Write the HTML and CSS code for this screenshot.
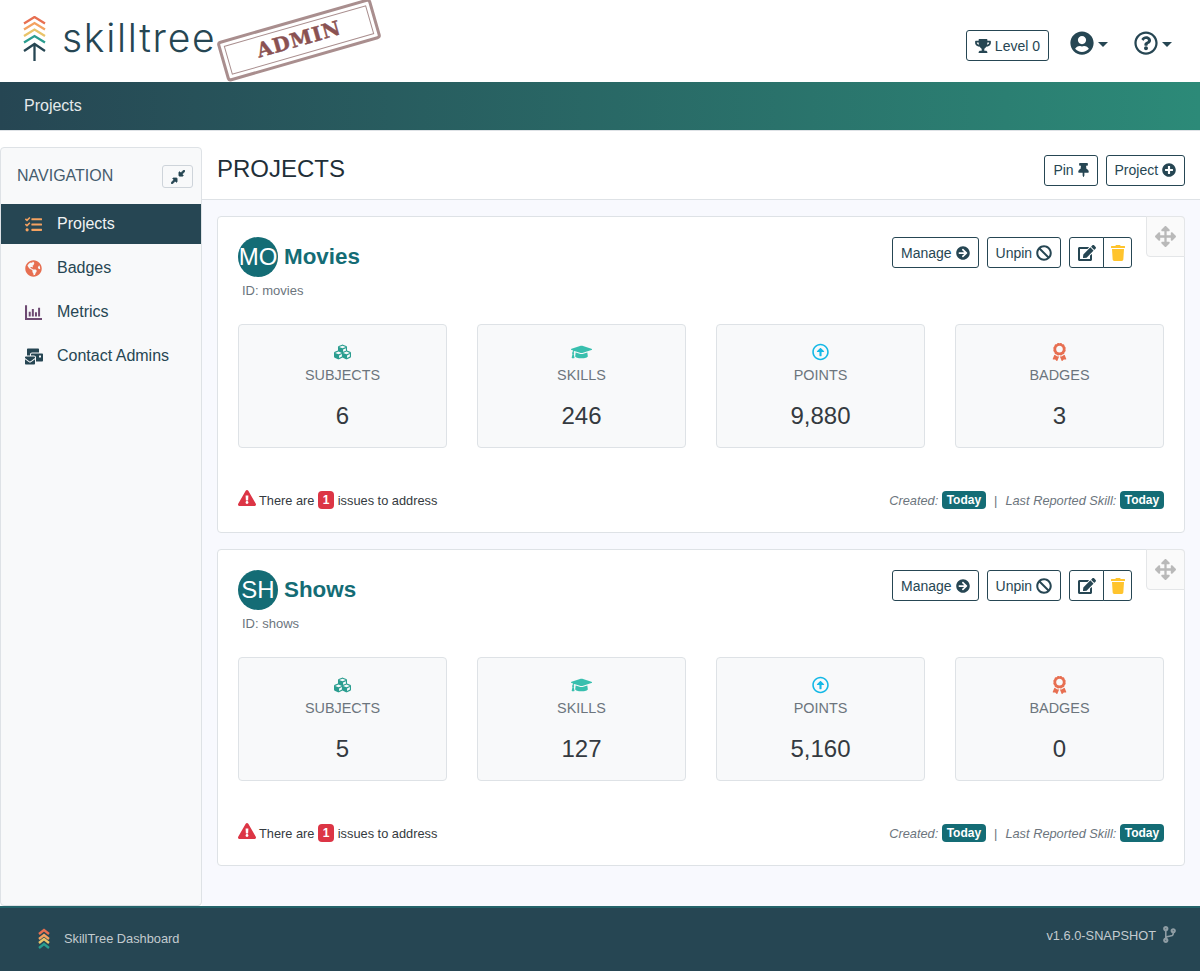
FILE: index.html
```html
<!DOCTYPE html>
<html lang="en">
<head>
    <meta charset="UTF-8">
    <meta name="viewport" content="width=device-width, initial-scale=1.0">
    <title>SkillTree Dashboard</title>
    <link rel="stylesheet" href="styles.css">
</head>
<body>

    <!-- icon sprite -->
    <svg class="sprite" xmlns="http://www.w3.org/2000/svg">
        <symbol id="i-trophy" viewBox="0 0 576 512"><path d="M552 64H448V24c0-13.3-10.7-24-24-24H152c-13.3 0-24 10.7-24 24v40H24C10.7 64 0 74.7 0 88v56c0 35.7 22.5 72.4 61.9 100.7 31.5 22.7 69.8 37.1 110 41.7C203.3 338.5 240 360 240 360v72h-48c-35.3 0-64 20.7-64 56v12c0 6.6 5.4 12 12 12h296c6.6 0 12-5.4 12-12v-12c0-35.3-28.7-56-64-56h-48v-72s36.7-21.5 68.1-73.6c40.3-4.6 78.6-19 110-41.7 39.3-28.3 61.9-65 61.9-100.7V88c0-13.3-10.7-24-24-24zM99.3 192.8C74.9 175.2 64 155.6 64 144v-16h64.2c1 32.6 5.8 61.2 12.8 86.2-15.1-5.2-29.2-12.4-41.7-21.4zM512 144c0 16.1-17.7 36.1-35.3 48.8-12.5 9-26.7 16.2-41.8 21.4 7-25 11.8-53.6 12.8-86.2H512v16z"/></symbol>
        <symbol id="i-user" viewBox="0 0 496 512"><path d="M248 8C111 8 0 119 0 256s111 248 248 248 248-111 248-248S385 8 248 8zm0 96c48.6 0 88 39.4 88 88s-39.4 88-88 88-88-39.4-88-88 39.4-88 88-88zm0 344c-58.7 0-111.3-26.6-146.5-68.2 18.8-35.4 55.6-59.8 98.5-59.8 2.4 0 4.8.4 7.1 1.1 13 4.2 26.6 6.9 40.9 6.9 14.3 0 28-2.7 40.9-6.9 2.3-.7 4.7-1.1 7.1-1.1 42.9 0 79.7 24.4 98.5 59.8C359.3 421.4 306.7 448 248 448z"/></symbol>
        <symbol id="i-help" viewBox="0 0 512 512"><path d="M256 8C119.043 8 8 119.083 8 256c0 136.997 111.043 248 248 248s248-111.003 248-248C504 119.083 392.957 8 256 8zm0 448c-110.532 0-200-89.431-200-200 0-110.495 89.472-200 200-200 110.491 0 200 89.471 200 200 0 110.53-89.431 200-200 200zm107.244-255.2c0 67.052-72.421 68.084-72.421 92.863V300c0 6.627-5.373 12-12 12h-45.647c-6.627 0-12-5.373-12-12v-8.659c0-35.745 27.1-50.034 47.579-61.516 17.561-9.845 28.324-16.541 28.324-29.579 0-17.246-21.999-28.693-39.784-28.693-23.189 0-33.894 10.977-48.942 29.969-4.057 5.12-11.46 6.071-16.666 2.124l-27.824-21.098c-5.107-3.872-6.251-11.066-2.644-16.363C184.846 131.491 214.94 112 261.794 112c49.071 0 101.45 38.304 101.45 88.8zM298 368c0 23.159-18.841 42-42 42s-42-18.841-42-42 18.841-42 42-42 42 18.841 42 42z"/></symbol>
        <symbol id="i-compress" viewBox="0 0 512 512"><path d="M200 288H88c-21.4 0-32.1 25.8-17 41l32 31L7 457c-9.4 9.4-9.4 24.6 0 33.9l15 15c9.4 9.4 24.6 9.4 33.9 0L152 409l31 32c15.1 15.1 41 4.4 41-17V312c0-13.3-10.7-24-24-24zm112-64h112c21.4 0 32.1-25.9 17-41l-31-32 96-96c9.4-9.4 9.4-24.6 0-33.9l-15-15c-9.4-9.4-24.6-9.4-33.9 0L361 103l-32-32c-15.1-15.1-41-4.4-41 17v112c0 13.3 10.7 24 24 24z"/></symbol>
        <symbol id="i-tasks" viewBox="0 0 512 512"><path d="M139.61 35.5a12 12 0 0 0-17 0L58.93 98.81l-22.7-22.12a12 12 0 0 0-17 0L3.53 92.41a12 12 0 0 0 0 17l47.59 47.4a12.78 12.78 0 0 0 17.61 0l15.59-15.62L156.52 69a12.09 12.09 0 0 0 .09-17zm0 159.19a12 12 0 0 0-17 0l-63.68 63.72-22.7-22.1a12 12 0 0 0-17 0L3.53 252a12 12 0 0 0 0 17L51 316.5a12.77 12.77 0 0 0 17.6 0l15.7-15.69 72.2-72.22a12 12 0 0 0 .09-16.9zM64 368c-26.49 0-48.59 21.5-48.59 48S37.53 464 64 464a48 48 0 0 0 0-96zm432 16H208a16 16 0 0 0-16 16v32a16 16 0 0 0 16 16h288a16 16 0 0 0 16-16v-32a16 16 0 0 0-16-16zm0-320H208a16 16 0 0 0-16 16v32a16 16 0 0 0 16 16h288a16 16 0 0 0 16-16V80a16 16 0 0 0-16-16zm0 160H208a16 16 0 0 0-16 16v32a16 16 0 0 0 16 16h288a16 16 0 0 0 16-16v-32a16 16 0 0 0-16-16z"/></symbol>
        <symbol id="i-globe" viewBox="0 0 496 512"><path d="M248 8C111.03 8 0 119.03 0 256s111.03 248 248 248 248-111.03 248-248S384.97 8 248 8zm82.29 357.6c-3.9 3.88-7.99 7.95-11.31 11.28-2.99 3-5.1 6.7-6.17 10.71-1.51 5.66-2.73 11.38-4.77 16.87l-17.39 46.85c-13.76 3-28 4.69-42.65 4.69v-27.38c1.69-12.62-7.64-36.26-22.63-51.25-6-6-9.37-14.14-9.37-22.63v-32.01c0-11.64-6.27-22.34-16.46-27.97-14.37-7.95-34.81-19.06-48.81-26.11-11.48-5.78-22.1-13.14-31.65-21.75l-.8-.72a114.792 114.792 0 0 1-18.06-20.74c-9.38-13.77-24.66-36.42-34.59-51.14 20.47-45.5 57.36-82.04 103.2-101.89l24.01 12.01C203.48 89.74 216 82.01 216 70.11v-11.3c7.99-1.29 16.12-2.11 24.39-2.42l28.3 28.3c6.25 6.25 6.25 16.38 0 22.63L264 112l-10.34 10.34c-3.12 3.12-3.12 8.19 0 11.31l4.69 4.69c3.12 3.12 3.12 8.19 0 11.31l-8 8a8.008 8.008 0 0 1-5.66 2.34h-8.99c-2.08 0-4.08.81-5.58 2.27l-9.92 9.65a8.008 8.008 0 0 0-1.58 9.31l15.59 31.19c2.66 5.32-1.21 11.58-7.15 11.58h-5.64c-1.93 0-3.79-.7-5.24-1.96l-9.28-8.06a16.017 16.017 0 0 0-15.55-3.1l-31.17 10.39a11.95 11.95 0 0 0-8.17 11.34c0 4.53 2.56 8.66 6.61 10.69l11.08 5.54c9.41 4.71 19.79 7.16 30.31 7.16s22.59 27.29 32 32h66.75c8.49 0 16.62 3.37 22.63 9.37l13.69 13.69a30.503 30.503 0 0 1 8.93 21.57 46.536 46.536 0 0 1-13.72 32.98zM417 274.25c-5.79-1.45-10.84-5-14.15-9.97l-17.98-26.97a23.97 23.97 0 0 1 0-26.62l19.59-29.38c2.32-3.47 5.5-6.29 9.24-8.15l12.98-6.49C440.2 193.59 448 223.87 448 256c0 8.67-.74 17.16-1.82 25.54L417 274.25z"/></symbol>
        <symbol id="i-metrics" viewBox="0 0 512 512"><path d="M0 40h62v380h450v62H0zM112 230h60v150h-60zM206 150h60v230h-60zM300 250h60v130h-60zM394 110h60v270h-60z"/></symbol>
        <symbol id="i-mail" viewBox="0 0 576 512"><path d="M160 448c-25.6 0-51.2-22.4-64-32-64-44.8-83.2-60.8-96-70.4V480c0 17.67 14.33 32 32 32h256c17.67 0 32-14.33 32-32V345.6c-12.8 9.6-32 25.6-96 70.4-12.8 9.6-38.4 32-64 32zm128-192H32c-17.67 0-32 14.33-32 32v16c25.6 19.2 22.4 19.2 115.2 86.4 9.6 6.4 28.8 25.6 44.8 25.6s35.2-19.2 44.8-22.4c92.8-67.2 89.6-67.2 115.2-86.4V288c0-17.67-14.33-32-32-32zm256-96H224c-17.67 0-32 14.33-32 32v32h96c33.21 0 60.59 25.42 63.71 57.82l.29-.22V416h192c17.67 0 32-14.33 32-32V192c0-17.67-14.33-32-32-32zm-32 128h-64v-64h64v64zm-352-96c0-35.29 28.71-64 64-64h224V32c0-17.67-14.33-32-32-32H96C78.33 0 64 14.33 64 32v192h96v-32z"/></symbol>
        <symbol id="i-pin" viewBox="0 0 384 512"><path d="M298.028 214.267L285.793 96H328c13.255 0 24-10.745 24-24V24c0-13.255-10.745-24-24-24H56C42.745 0 32 10.745 32 24v48c0 13.255 10.745 24 24 24h42.207L85.972 214.267C37.465 236.82 0 277.261 0 328c0 13.255 10.745 24 24 24h136v104.007c0 1.242.289 2.467.845 3.578l24 48c2.941 5.882 11.364 5.893 14.311 0l24-48a8.008 8.008 0 0 0 .845-3.578V352h136c13.255 0 24-10.745 24-24-.001-51.183-37.983-91.42-85.973-113.733z"/></symbol>
        <symbol id="i-plus" viewBox="0 0 512 512"><path d="M256 8C119 8 8 119 8 256s111 248 248 248 248-111 248-248S393 8 256 8zm144 276c0 6.6-5.4 12-12 12h-92v92c0 6.6-5.4 12-12 12h-56c-6.6 0-12-5.4-12-12v-92h-92c-6.6 0-12-5.4-12-12v-56c0-6.6 5.4-12 12-12h92v-92c0-6.6 5.4-12 12-12h56c6.6 0 12 5.4 12 12v92h92c6.6 0 12 5.4 12 12v56z"/></symbol>
        <symbol id="i-right" viewBox="0 0 512 512"><path d="M256 8c137 0 248 111 248 248S393 504 256 504 8 393 8 256 119 8 256 8zm-28.9 143.6l75.5 72.4H120c-13.3 0-24 10.7-24 24v16c0 13.3 10.7 24 24 24h182.6l-75.5 72.4c-9.7 9.3-9.9 24.8-.4 34.3l11 10.9c9.4 9.4 24.6 9.4 33.9 0L404.3 273c9.4-9.4 9.4-24.6 0-33.9L271.6 106.3c-9.4-9.4-24.6-9.4-33.9 0l-11 10.9c-9.5 9.6-9.3 25.1.4 34.4z"/></symbol>
        <symbol id="i-ban" viewBox="0 0 512 512"><path d="M256 8C119.034 8 8 119.033 8 256s111.034 248 248 248 248-111.034 248-248S392.967 8 256 8zm130.108 117.892c65.448 65.448 70 165.481 20.677 235.637L150.47 105.216c70.204-49.356 170.226-44.735 235.638 20.676zM125.892 386.108c-65.448-65.448-70-165.481-20.677-235.637L361.53 406.784c-70.203 49.356-170.226 44.736-235.638-20.676z"/></symbol>
        <symbol id="i-edit" viewBox="0 0 576 512"><path d="M402.6 83.2l90.2 90.2c3.8 3.8 3.8 10 0 13.8L274.4 405.6l-92.8 10.3c-12.4 1.4-22.9-9.1-21.5-21.5l10.3-92.8L388.8 83.2c3.8-3.8 10-3.8 13.8 0zm162-22.9l-48.8-48.8c-15.2-15.2-39.9-15.2-55.2 0l-35.4 35.4c-3.8 3.8-3.8 10 0 13.8l90.2 90.2c3.8 3.8 10 3.8 13.8 0l35.4-35.4c15.2-15.3 15.2-40 0-55.2zM384 346.2V448H64V128h229.8c3.2 0 6.2-1.3 8.5-3.5l40-40c7.6-7.6 2.2-20.5-8.5-20.5H48C21.5 64 0 85.5 0 112v352c0 26.5 21.5 48 48 48h352c26.5 0 48-21.5 48-48V306.2c0-10.7-12.9-16-20.5-8.5l-40 40c-2.2 2.3-3.5 5.3-3.5 8.5z"/></symbol>
        <symbol id="i-trash" viewBox="0 0 448 512"><path d="M432 32H312l-9.4-18.7A24 24 0 0 0 281.1 0H166.8a23.72 23.72 0 0 0-21.4 13.3L136 32H16A16 16 0 0 0 0 48v32a16 16 0 0 0 16 16h416a16 16 0 0 0 16-16V48a16 16 0 0 0-16-16zM53.2 467a48 48 0 0 0 47.9 45h245.8a48 48 0 0 0 47.9-45L416 128H32z"/></symbol>
        <symbol id="i-move" viewBox="0 0 512 512"><path d="M352.201 425.775l-79.196 79.196c-9.373 9.373-24.568 9.373-33.941 0l-79.196-79.196c-15.119-15.119-4.411-40.971 16.971-40.97h51.162L228 284H127.196v51.162c0 21.382-25.851 32.09-40.971 16.971L7.029 272.937c-9.373-9.373-9.373-24.569 0-33.941L86.225 159.8c15.119-15.119 40.971-4.411 40.971 16.971V228H228V127.196h-51.23c-21.382 0-32.09-25.851-16.971-40.971l79.196-79.196c9.373-9.373 24.568-9.373 33.941 0l79.196 79.196c15.119 15.119 4.411 40.971-16.971 40.971h-51.162V228h100.804v-51.162c0-21.382 25.851-32.09 40.97-16.971l79.196 79.196c9.373 9.373 9.373 24.569 0 33.941L425.773 352.2c-15.119 15.119-40.971 4.411-40.97-16.971V284H284v100.804h51.23c21.382 0 32.09 25.851 16.971 40.971z"/></symbol>
        <symbol id="i-cubes" viewBox="0 0 512 512"><path d="M488.6 250.2L392 214V105.5c0-15-9.3-28.4-23.4-33.7l-100-37.5c-8.1-3.1-17.1-3.1-25.3 0l-100 37.5c-14.1 5.3-23.4 18.7-23.4 33.7V214l-96.6 36.2C9.3 255.5 0 268.9 0 283.9V394c0 13.6 7.7 26.1 19.9 32.2l100 50c10.1 5.1 22.1 5.1 32.2 0l103.9-52 103.9 52c10.1 5.1 22.1 5.1 32.2 0l100-50c12.2-6.1 19.9-18.6 19.9-32.2V283.9c0-15-9.3-28.4-23.4-33.7zM358 214.8l-85 31.9v-68.2l85-37v73.3zM154 104.1l102-38.2 102 38.2v.6l-102 41.4-102-41.4v-.6zm84 291.1l-85 42.5v-79.1l85-38.8v75.4zm0-112l-102 41.4-102-41.4v-.6l102-38.2 102 38.2v.6zm240 112l-85 42.5v-79.1l85-38.8v75.4zm0-112l-102 41.4-102-41.4v-.6l102-38.2 102 38.2v.6z"/></symbol>
        <symbol id="i-cap" viewBox="0 0 640 512"><path d="M622.34 153.2L343.4 67.5c-15.2-4.67-31.6-4.67-46.79 0L17.66 153.2c-23.54 7.23-23.54 38.36 0 45.59l48.63 14.94c-10.67 13.19-17.23 29.28-17.88 46.9C38.78 266.15 32 276.11 32 288c0 10.78 5.68 19.85 13.86 25.65L20.33 428.53C18.11 438.52 25.71 448 35.94 448h56.11c10.24 0 17.84-9.48 15.62-19.47L82.14 313.65C90.32 307.85 96 298.78 96 288c0-11.57-6.47-21.25-15.66-26.87.76-15.02 8.44-28.3 20.69-36.72L296.6 284.5c9.06 2.78 26.44 6.25 46.79 0l278.95-85.7c23.55-7.24 23.55-38.36 0-45.6zM352.79 315.09c-28.53 8.76-52.84 3.92-65.59 0l-145.02-44.55L128 384c0 35.35 85.96 64 192 64s192-28.65 192-64l-14.18-113.47-145.03 44.56z"/></symbol>
        <symbol id="i-up" viewBox="0 0 512 512"><path d="M256 504c137 0 248-111 248-248S393 8 256 8 8 119 8 256s111 248 248 248zm0-448c110.500 0 200 89.500 200 200s-89.500 200-200 200S56 366.500 56 256 145.500 56 256 56zm20 328h-40c-6.600 0-12-5.400-12-12V256h-67c-10.700 0-16-12.900-8.500-20.500l99-99c4.700-4.700 12.300-4.700 17 0l99 99c7.600 7.600 2.200 20.500-8.500 20.500h-67v116c0 6.600-5.400 12-12 12z"/></symbol>
        <symbol id="i-award" viewBox="0 0 384 512"><path d="M97.12 362.630c-8.690-8.690-4.160-6.240-25.120-11.850-9.510-2.550-17.870-7.450-25.430-13.320L1.200 448.700c-4.390 10.770 3.810 22.470 15.430 22.030l52.690-2.010L105.560 507c8 8.440 22.040 5.810 26.430-4.960l52.050-127.620c-10.840 6.040-22.870 9.580-35.310 9.580-19.500 0-37.820-7.590-51.610-21.370zM382.800 448.700l-45.370-111.240c-7.560 5.880-15.920 10.770-25.430 13.320-21.070 5.640-16.450 3.180-25.120 11.850-13.790 13.780-32.120 21.370-51.620 21.370-12.440 0-24.470-3.550-35.310-9.580L252 502.040c4.390 10.770 18.440 13.400 26.430 4.960l36.250-38.280 52.690 2.010c11.620.44 19.820-11.270 15.430-22.030zM263 340c15.280-15.550 17.030-14.210 38.790-20.140 13.890-3.790 24.750-14.840 28.470-28.980 7.480-28.400 5.540-24.970 25.950-45.750 10.170-10.350 14.140-25.440 10.420-39.580-7.470-28.380-7.480-24.420 0-52.830 3.720-14.140-.25-29.230-10.420-39.580-20.410-20.780-18.470-17.360-25.950-45.750-3.720-14.140-14.580-25.190-28.470-28.980-27.880-7.610-24.520-5.620-44.950-26.410-10.170-10.350-25-14.400-38.890-10.610-27.870 7.600-23.980 7.610-51.900 0-13.890-3.790-28.720.25-38.890 10.610-20.410 20.780-17.050 18.800-44.940 26.410-13.890 3.790-24.750 14.840-28.470 28.980-7.470 28.390-5.540 24.970-25.950 45.750-10.170 10.350-14.150 25.440-10.420 39.580 7.470 28.360 7.480 24.400 0 52.820-3.720 14.140.25 29.230 10.420 39.590 20.410 20.780 18.470 17.350 25.950 45.750 3.720 14.140 14.580 25.190 28.470 28.980C104.600 325.960 106.270 325 121 340c13.230 13.470 33.840 15.880 49.740 5.820a39.676 39.676 0 0 1 42.530 0c15.890 10.060 36.500 7.650 49.730-5.820zM97.660 175.960c0-53.030 42.240-96.020 94.340-96.020s94.340 42.990 94.340 96.020-42.240 96.020-94.340 96.020-94.340-42.990-94.340-96.020z"/></symbol>
        <symbol id="i-warn" viewBox="0 0 576 512"><path d="M569.517 440.013C587.975 472.007 564.806 512 527.94 512H48.054c-36.937 0-59.999-40.055-41.577-71.987L246.423 23.985c18.467-32.009 64.72-31.951 83.154 0l239.94 416.028zM288 354c-25.405 0-46 20.595-46 46s20.595 46 46 46 46-20.595 46-46-20.595-46-46-46zm-43.673-165.346l7.418 136c.347 6.364 5.609 11.346 11.982 11.346h48.546c6.373 0 11.635-4.982 11.982-11.346l7.418-136c.375-6.874-5.098-12.654-11.982-12.654h-63.383c-6.884 0-12.356 5.78-11.981 12.654z"/></symbol>
        <symbol id="i-branch" viewBox="0 0 384 512"><path d="M384 144c0-44.200-35.800-80-80-80s-80 35.800-80 80c0 36.400 24.300 67.100 57.500 76.800-.6 16.100-4.200 28.500-11 36.900-15.400 19.200-49.300 22.400-85.200 25.700-28.200 2.600-57.400 5.400-81.300 16.900v-144c32.500-10.200 56-40.500 56-76.300 0-44.200-35.800-80-80-80S0 35.800 0 80c0 35.800 23.500 66.100 56 76.300v199.300C23.500 365.900 0 396.200 0 432c0 44.200 35.800 80 80 80s80-35.800 80-80c0-34-21.200-63.100-51.200-74.600 3.100-5.200 7.800-9.800 14.900-13.400 16.200-8.200 40.400-10.400 66.100-12.800 42.200-3.900 90-8.400 118.200-43.400 14-17.400 21.100-39.800 21.600-67.900 31.600-10.800 54.400-40.700 54.400-75.900zM80 64c8.800 0 16 7.200 16 16s-7.200 16-16 16-16-7.200-16-16 7.200-16 16-16zm0 384c-8.800 0-16-7.200-16-16s7.200-16 16-16 16 7.200 16 16-7.200 16-16 16zm224-320c8.800 0 16 7.200 16 16s-7.200 16-16 16-16-7.200-16-16 7.200-16 16-16z"/></symbol>
    </svg>

    <!-- header -->
    <header class="top-header">
        <div class="brand">
            <svg class="logo-mark" viewBox="0 0 23 45" stroke-width="2.300">
                <path d="M1 7.500 11.500 1 22 7.500" stroke="#e76f51"/>
                <path d="M1 13.500 11.500 7 22 13.500" stroke="#f4a261"/>
                <path d="M1 20 11.500 13.500 22 20" stroke="#e9c46a"/>
                <path d="M1 26.500 11.500 20 22 26.500" stroke="#2a9d8f"/>
                <path d="M1 35 11.500 28 22 35M11.500 28v17" stroke="#264653"/>
            </svg>
            <span class="logo-text">skilltree</span>
            <div class="stamp"><div class="stamp-inner">ADMIN</div></div>
        </div>
        <div class="header-tools">
            <span class="btn level-btn"><svg class="ic-trophy"><use href="#i-trophy"/></svg> Level 0</span>
            <span class="menu-icon"><svg class="ic-big"><use href="#i-user"/></svg><i class="caret"></i></span>
            <span class="menu-icon"><svg class="ic-big"><use href="#i-help"/></svg><i class="caret"></i></span>
        </div>
    </header>
    <div class="breadcrumb-bar">Projects</div>

    <div class="page-body">
        <!-- side nav -->
        <nav class="side-nav">
            <div class="nav-head">
                <span>NAVIGATION</span>
                <span class="collapse-btn"><svg class="ic-sm"><use href="#i-compress"/></svg></span>
            </div>
            <a class="nav-item active"><svg class="nav-ic c-orange"><use href="#i-tasks"/></svg>Projects</a>
            <a class="nav-item"><svg class="nav-ic c-coral"><use href="#i-globe"/></svg>Badges</a>
            <a class="nav-item"><svg class="nav-ic c-purple"><use href="#i-metrics"/></svg>Metrics</a>
            <a class="nav-item"><svg class="nav-ic nav-ic-wide c-dark"><use href="#i-mail"/></svg>Contact Admins</a>
        </nav>

        <main class="main-area">
            <div class="page-title">
                <h1>PROJECTS</h1>
                <div class="title-actions">
                    <span class="btn">Pin <svg class="ic-pin"><use href="#i-pin"/></svg></span>
                    <span class="btn">Project <svg class="ic"><use href="#i-plus"/></svg></span>
                </div>
            </div>

            <div class="project-list">
                <!-- Movies -->
                <section class="project-card">
                    <div class="move-handle"><svg><use href="#i-move"/></svg></div>
                    <div class="card-top">
                        <div>
                            <div class="project-name"><span class="avatar">MO</span><h2>Movies</h2></div>
                            <div class="project-id">ID: movies</div>
                        </div>
                        <div class="card-actions">
                            <span class="btn">Manage <svg class="ic"><use href="#i-right"/></svg></span>
                            <span class="btn">Unpin <svg class="ic-ban"><use href="#i-ban"/></svg></span>
                            <span class="btn-group">
                                <span class="btn"><svg class="ic-edit"><use href="#i-edit"/></svg></span>
                                <span class="btn"><svg class="ic-trash c-yellow"><use href="#i-trash"/></svg></span>
                            </span>
                        </div>
                    </div>
                    <div class="stats">
                        <div class="stat"><svg class="stat-ic c-green"><use href="#i-cubes"/></svg><div class="stat-label">SUBJECTS</div><div class="stat-value">6</div></div>
                        <div class="stat"><svg class="stat-ic stat-ic-wide c-teal"><use href="#i-cap"/></svg><div class="stat-label">SKILLS</div><div class="stat-value">246</div></div>
                        <div class="stat"><svg class="stat-ic c-blue"><use href="#i-up"/></svg><div class="stat-label">POINTS</div><div class="stat-value">9,880</div></div>
                        <div class="stat"><svg class="stat-ic c-coral"><use href="#i-award"/></svg><div class="stat-label">BADGES</div><div class="stat-value">3</div></div>
                    </div>
                    <div class="card-foot">
                        <div class="issues"><svg class="ic-warn"><use href="#i-warn"/></svg> There are <span class="badge badge-red">1</span> issues to address</div>
                        <div class="dates"><em>Created:</em> <span class="badge">Today</span> <span class="sep">|</span> <em>Last Reported Skill:</em> <span class="badge">Today</span></div>
                    </div>
                </section>

                <!-- Shows -->
                <section class="project-card">
                    <div class="move-handle"><svg><use href="#i-move"/></svg></div>
                    <div class="card-top">
                        <div>
                            <div class="project-name"><span class="avatar">SH</span><h2>Shows</h2></div>
                            <div class="project-id">ID: shows</div>
                        </div>
                        <div class="card-actions">
                            <span class="btn">Manage <svg class="ic"><use href="#i-right"/></svg></span>
                            <span class="btn">Unpin <svg class="ic-ban"><use href="#i-ban"/></svg></span>
                            <span class="btn-group">
                                <span class="btn"><svg class="ic-edit"><use href="#i-edit"/></svg></span>
                                <span class="btn"><svg class="ic-trash c-yellow"><use href="#i-trash"/></svg></span>
                            </span>
                        </div>
                    </div>
                    <div class="stats">
                        <div class="stat"><svg class="stat-ic c-green"><use href="#i-cubes"/></svg><div class="stat-label">SUBJECTS</div><div class="stat-value">5</div></div>
                        <div class="stat"><svg class="stat-ic stat-ic-wide c-teal"><use href="#i-cap"/></svg><div class="stat-label">SKILLS</div><div class="stat-value">127</div></div>
                        <div class="stat"><svg class="stat-ic c-blue"><use href="#i-up"/></svg><div class="stat-label">POINTS</div><div class="stat-value">5,160</div></div>
                        <div class="stat"><svg class="stat-ic c-coral"><use href="#i-award"/></svg><div class="stat-label">BADGES</div><div class="stat-value">0</div></div>
                    </div>
                    <div class="card-foot">
                        <div class="issues"><svg class="ic-warn"><use href="#i-warn"/></svg> There are <span class="badge badge-red">1</span> issues to address</div>
                        <div class="dates"><em>Created:</em> <span class="badge">Today</span> <span class="sep">|</span> <em>Last Reported Skill:</em> <span class="badge">Today</span></div>
                    </div>
                </section>
            </div>
        </main>
    </div>

    <footer class="page-footer">
        <div class="foot-left">
            <svg class="foot-logo" viewBox="0 0 12 21" stroke-width="2.400">
                <path d="M1 6l5-4 5 4" stroke="#e76f51"/>
                <path d="M1 11l5-4 5 4" stroke="#f4a261"/>
                <path d="M1 15l5-4 5 4" stroke="#e9c46a"/>
                <path d="M1 20l5-4 5 4" stroke="#2a9d8f"/>
            </svg>
            SkillTree Dashboard
        </div>
        <div class="foot-right">v1.6.0-SNAPSHOT <svg class="ic-branch"><use href="#i-branch"/></svg></div>
    </footer>

</body>
</html>
```

FILE: styles.css
```css
* { box-sizing: border-box; }
html, body { height: 100%; }
body { margin: 0; min-height: 971px; display: flex; flex-direction: column; background: #fff; color: #264653; font-family: "Liberation Sans", Arial, sans-serif; font-size: 16px; }
svg { fill: currentColor; }
.sprite { display: none; }

/* header */
.top-header { height: 82px; flex: none; display: flex; justify-content: space-between; padding: 0 28px 0 23px; }
.brand { display: flex; align-items: flex-start; position: relative; }
.logo-mark { width: 23px; height: 45px; margin-top: 16px; fill: none; }
.logo-text { margin: 13px 0 0 16px; font-family: Inter, sans-serif; font-weight: 300; font-size: 39px; line-height: 50px; letter-spacing: 1.700px; color: #264653; }
.stamp { position: absolute; left: 196px; top: 19px; width: 160px; height: 42px; border: 3px solid #a98e8e; border-radius: 4px; padding: 3px; transform: rotate(-16deg); background: #fff; z-index: 2; }
.stamp-inner { height: 100%; border: 1px solid #a98e8e; text-align: center; font-family: "DejaVu Serif", serif; font-weight: bold; font-size: 20px; line-height: 26px; letter-spacing: .8px; color: #8a5252; -webkit-text-stroke: .4px #8a5252; }
.header-tools { display: flex; align-items: flex-start; padding-top: 30px; }
.level-btn { margin-right: 21px; }
.menu-icon { display: flex; align-items: center; margin-right: 26px; margin-top: 1px; }
.menu-icon:last-child { margin-right: 0; }
.ic-big { width: 24px; height: 24px; }
.caret { width: 0; height: 0; margin-left: 4px; margin-top: 3px; border: 5px solid transparent; border-top-color: #264653; border-bottom: 0; }

.breadcrumb-bar { height: 49px; flex: none; padding: 15px 24px 0; background: linear-gradient(90deg, #264653, #2c8a78); border-bottom: 1px solid #dee2e6; color: #e4e9eb; font-size: 16px; }

/* buttons */
.btn { display: inline-flex; align-items: center; justify-content: center; gap: 3.900px; height: 31px; padding: 0 8px; border: 1px solid #264653; border-radius: 3px; background: #fff; font-size: 14px; color: #264653; white-space: nowrap; }
.btn-group { display: inline-flex; }
.btn-group .btn:first-child { width: 35px; border-radius: 3px 0 0 3px; padding: 0; }
.btn-group .btn:last-child { width: 29px; margin-left: -1px; border-radius: 0 3px 3px 0; padding: 0; }
.ic { width: 14px; height: 14px; }
.ic-trophy { width: 16px; height: 14px; }
.ic-pin { width: 11px; height: 14px; }
.ic-trash { width: 14px; height: 16px; }
.ic-sm { width: 14px; height: 14px; stroke: currentColor; stroke-width: 24px; }
.ic-ban { width: 16px; height: 16px; }
.ic-edit { width: 18px; height: 16px; }

/* page */
.page-body { flex: 1; display: flex; min-height: 0; }
.side-nav { width: 202px; flex: none; margin-top: 16px; background: #f8f9fa; border: 1px solid #dee2e6; border-radius: 4px; }
.nav-head { height: 56px; display: flex; align-items: center; justify-content: space-between; padding: 0 8px 0 16px; color: #455c6e; }
.collapse-btn { width: 31px; height: 23px; display: flex; align-items: center; justify-content: center; margin-top: 1px; border: 1px solid #ced4da; border-radius: 3px; color: #264653; }
.nav-item { height: 40px; margin-bottom: 4px; display: flex; align-items: center; padding-left: 24px; color: #264653; }
.nav-item.active { background: #264653; color: #f0f3f4; }
.nav-ic { width: 17px; height: 17px; margin-right: 15px; flex: none; }
.nav-ic-wide { width: 18px; margin-right: 14px; }
.c-orange { color: #f4a261; }
.c-coral { color: #e76f51; }
.c-purple { color: #6d4a72; }
.c-dark { color: #264653; }
.c-yellow { color: #ffc42d; }
.c-green { color: #2a9d8f; }
.c-teal { color: #38bfae; }
.c-blue { color: #14b8e6; }

.main-area { flex: 1; min-width: 0; display: flex; flex-direction: column; background: #f8f9fe; }
.page-title { height: 69px; flex: none; display: flex; align-items: center; justify-content: space-between; padding: 8px 15px 0; background: #fff; border-bottom: 1px solid #dee2e6; }
.page-title h1 { margin: 0; font-size: 24px; font-weight: 400; color: #1f2f38; }
.title-actions { display: flex; gap: 8px; margin-top: 2px; }

.project-list { display: flex; flex-direction: column; gap: 16px; padding: 16px 15px; }
.project-card { position: relative; height: 317px; padding: 20px; background: #fff; border: 1px solid #dee2e6; border-radius: 4px; }
.move-handle { position: absolute; top: -1px; right: -1px; width: 39px; height: 41px; display: flex; align-items: center; justify-content: center; background: #fafafa; border: 1px solid #e4e6e8; border-radius: 0 4px 0 4px; color: #b9b9b9; }
.move-handle svg { width: 21px; height: 21px; }
.card-top { height: 87px; display: flex; justify-content: space-between; }
.project-name { display: flex; align-items: center; height: 40px; }
.avatar { width: 40px; height: 40px; display: flex; align-items: center; justify-content: center; border-radius: 50%; background: #146c75; color: #fff; font-size: 24px; }
.project-name h2 { margin: -1px 0 0 6px; font-size: 22.400px; font-weight: bold; color: #146c75; }
.project-id { margin: 6px 0 0 4px; font-size: 13px; line-height: 16px; color: #6c757d; }
.card-actions { display: flex; gap: 8px; padding-right: 32px; height: 31px; }

.stats { display: grid; grid-template-columns: repeat(4, 1fr); gap: 30px; }
.stat { height: 124px; display: flex; flex-direction: column; align-items: center; padding-top: 18px; background: #f8f9fa; border: 1px solid #dee2e6; border-radius: 4px; }
.stat-ic { width: 17px; height: 18px; }
.stat-ic-wide { width: 21px; }
.stat-label { margin-top: 6px; font-size: 14.400px; line-height: 17px; color: #6c757d; }
.stat-value { margin-top: 18px; font-size: 24px; line-height: 28px; color: #343a40; }

.card-foot { display: flex; align-items: center; justify-content: space-between; margin-top: 42px; height: 20px; font-size: 12.800px; color: #343a40; }
.issues { display: flex; align-items: center; gap: 3.500px; }
.ic-warn { width: 18px; height: 16px; margin-top: -4px; margin-right: -.5px; color: #dc3545; }
.dates { display: flex; align-items: center; gap: 3.600px; color: #6c757d; }
.sep { margin: 0 4.500px; }
.badge { display: inline-block; padding: 0 4.800px; height: 18px; border-radius: 4px; background: #146c75; color: #fff; font-size: 12px; font-weight: bold; line-height: 18px; }
.badge-red { background: #dc3545; }

/* footer */
.page-footer { height: 65px; flex: none; display: flex; justify-content: space-between; padding: 0 24px 0 38px; background: #264653; border-top: 2px solid #24636a; font-size: 12.800px; color: #c3cbcf; }
.foot-left { display: flex; align-items: center; gap: 14px; height: 60px; }
.foot-logo { width: 12px; height: 21px; fill: none; }
.foot-right { display: flex; align-items: flex-start; gap: 7px; padding-top: 20px; }
.ic-branch { width: 13px; height: 17px; margin-top: -2px; color: #8f9da4; }
```
